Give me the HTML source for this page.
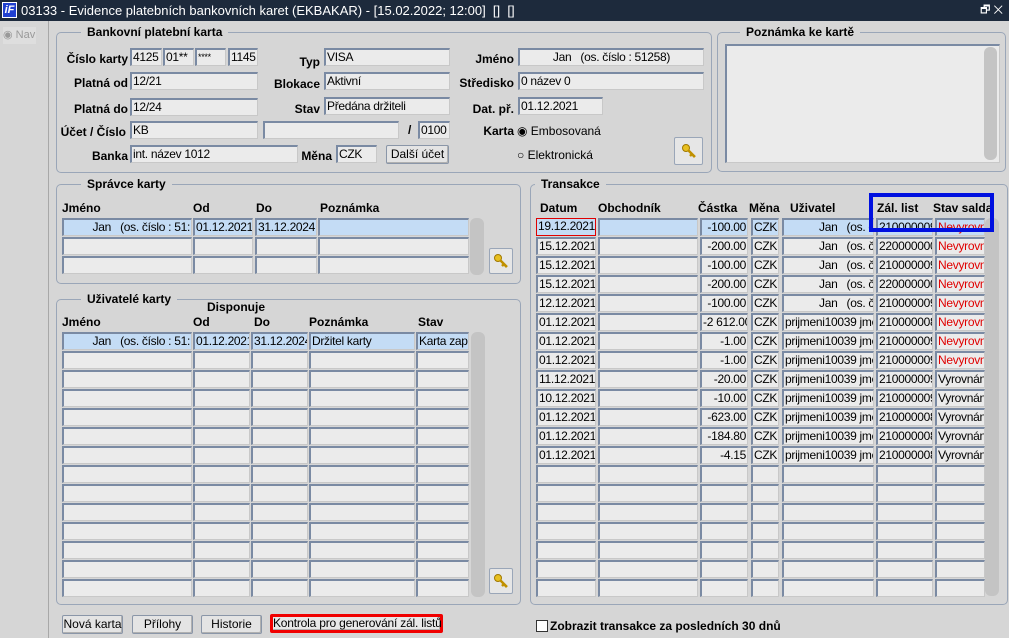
<!DOCTYPE html>
<html><head><meta charset="utf-8"><style>
*{box-sizing:border-box;margin:0;padding:0}
body{width:1009px;height:638px;overflow:hidden;background:#d6d6d6;font-family:"Liberation Sans",sans-serif;font-size:12px;color:#000;position:relative}
.a{position:absolute}
.f{position:absolute;height:18px;background:#ebebeb;border:1px solid #c8c8c8;border-top:2px solid #7a8aa3;border-left:2px solid #7a8aa3;padding:0 1px;line-height:14px;white-space:nowrap;overflow:hidden;font-size:12px;letter-spacing:-0.3px}
.s{background:#c4dcf5}
.r{text-align:right}
.l{position:absolute;font-weight:bold;white-space:nowrap;text-align:right}
.h{position:absolute;font-weight:bold;white-space:nowrap}
.g{position:absolute;border:1px solid #9aa6b8;border-radius:5px}
.gt{position:absolute;background:#d6d6d6;font-weight:bold;padding:0 6px;top:-8px;font-size:12px}
.btn{position:absolute;height:19px;border:1px solid #8a96a8;background:#e4e4e4;border-radius:2px;text-align:center;line-height:16px;font-size:12px;white-space:nowrap;box-shadow:inset -1px -1px 0 #b0b0b0}
.sb{position:absolute;background:#c4c4c4;border-radius:6px}
.key{position:absolute;width:24px;height:26px;border:1px solid #9aa6b8;background:#e6e6e6;border-radius:2px}
.key svg{position:absolute;left:50%;top:50%;margin:-8px 0 0 -8px}
.red{color:#e00000}
</style></head><body>
<div class="a" style="left:0;top:0;width:1009px;height:21px;background:#1d2a3c;color:#fff;font-size:13px;line-height:21px">
<div class="a" style="left:2px;top:2px;width:15px;height:16px;background:#2040d0;color:#fff;font-weight:bold;font-style:italic;font-size:11px;line-height:14px;text-align:center;border:1px solid #fff">iF</div>
<span style="position:absolute;left:21px">03133 - Evidence platebních bankovních karet (EKBAKAR) - [15.02.2022; 12:00]&nbsp; [] &nbsp;[]</span>
<span style="position:absolute;right:6px;font-size:11px">🗗 ✕</span></div>
<div class="a" style="left:0;top:21px;width:49px;height:617px;border-right:1px solid #a8a8a8"></div>
<div class="a" style="left:3px;top:27px;width:33px;height:17px;background:#dedede;color:#999;font-size:11px;line-height:17px">◉ Nav</div>

<div class="g" style="left:56px;top:32px;width:656px;height:141px"><div class="gt" style="left:24px">Bankovní platební karta</div></div>
<div class="l" style="left:60px;top:52px;width:68px">Číslo karty</div>
<div class="f" style="left:130px;top:48px;width:32px">4125</div>
<div class="f" style="left:163px;top:48px;width:31px">01**</div>
<div class="f" style="left:195px;top:48px;width:31px;font-size:9px">****</div>
<div class="f" style="left:228px;top:48px;width:30px">1145</div>
<div class="l" style="left:60px;top:76px;width:68px">Platná od</div>
<div class="f" style="left:130px;top:72px;width:128px">12/21</div>
<div class="l" style="left:60px;top:102px;width:68px">Platná do</div>
<div class="f" style="left:130px;top:98px;width:128px">12/24</div>
<div class="l" style="left:50px;top:125px;width:76px">Účet / Číslo</div>
<div class="f" style="left:130px;top:121px;width:128px">KB</div>
<div class="f" style="left:263px;top:121px;width:136px"></div>
<div class="h" style="left:408px;top:123px">/</div>
<div class="f" style="left:418px;top:121px;width:32px">0100</div>
<div class="l" style="left:60px;top:149px;width:68px">Banka</div>
<div class="f" style="left:130px;top:145px;width:168px">int. název 1012</div>
<div class="l" style="left:270px;top:55px;width:50px">Typ</div>
<div class="f" style="left:324px;top:48px;width:126px">VISA</div>
<div class="l" style="left:260px;top:77px;width:60px">Blokace</div>
<div class="f" style="left:324px;top:72px;width:126px">Aktivní</div>
<div class="l" style="left:270px;top:102px;width:50px">Stav</div>
<div class="f" style="left:324px;top:97px;width:126px">Předána držiteli</div>
<div class="l" style="left:290px;top:149px;width:42px">Měna</div>
<div class="f" style="left:336px;top:145px;width:41px">CZK</div>
<div class="btn" style="left:386px;top:145px;width:63px">Další účet</div>
<div class="l" style="left:460px;top:52px;width:54px">Jméno</div>
<div class="f" style="left:518px;top:48px;width:186px;text-align:center">Jan &nbsp; (os. číslo : 51258)</div>
<div class="l" style="left:450px;top:76px;width:64px">Středisko</div>
<div class="f" style="left:518px;top:72px;width:186px">0 název 0</div>
<div class="l" style="left:450px;top:102px;width:64px">Dat. př.</div>
<div class="f" style="left:518px;top:97px;width:85px">01.12.2021</div>
<div class="l" style="left:470px;top:124px;width:44px">Karta</div>
<div class="a" style="left:517px;top:124px">◉ Embosovaná</div>
<div class="a" style="left:517px;top:148px">○ Elektronická</div>
<div class="key" style="left:674px;top:137px;width:29px;height:28px"><svg width="16" height="16" viewBox="0 0 16 16"><circle cx="5" cy="5" r="3.5" fill="#e8c020" stroke="#a07800"/><path d="M7 7 L14 14 M11 11 L9 13 M13 13 L12 14" stroke="#c09000" stroke-width="2.5" fill="none"/></svg></div>

<div class="g" style="left:717px;top:32px;width:289px;height:140px"><div class="gt" style="left:22px">Poznámka ke kartě</div></div>
<div class="f" style="left:725px;top:44px;width:275px;height:119px"></div>
<div class="sb" style="left:984px;top:47px;width:13px;height:113px"></div>

<div class="g" style="left:56px;top:184px;width:465px;height:100px"><div class="gt" style="left:24px">Správce karty</div></div>
<div class="h" style="left:62px;top:201px">Jméno</div><div class="h" style="left:193px;top:201px">Od</div><div class="h" style="left:256px;top:201px">Do</div><div class="h" style="left:320px;top:201px">Poznámka</div>
<div class="sb" style="left:470px;top:218px;width:14px;height:57px"></div>
<div class="key" style="left:489px;top:248px"><svg width="16" height="16" viewBox="0 0 16 16"><circle cx="5" cy="5" r="3.5" fill="#e8c020" stroke="#a07800"/><path d="M7 7 L14 14 M11 11 L9 13 M13 13 L12 14" stroke="#c09000" stroke-width="2.5" fill="none"/></svg></div>

<div class="g" style="left:56px;top:299px;width:465px;height:306px"><div class="gt" style="left:24px">Uživatelé karty</div></div>
<div class="h" style="left:207px;top:300px">Disponuje</div>
<div class="h" style="left:62px;top:315px">Jméno</div><div class="h" style="left:193px;top:315px">Od</div><div class="h" style="left:254px;top:315px">Do</div><div class="h" style="left:309px;top:315px">Poznámka</div><div class="h" style="left:418px;top:315px">Stav</div>
<div class="sb" style="left:471px;top:332px;width:14px;height:265px"></div>
<div class="key" style="left:489px;top:568px"><svg width="16" height="16" viewBox="0 0 16 16"><circle cx="5" cy="5" r="3.5" fill="#e8c020" stroke="#a07800"/><path d="M7 7 L14 14 M11 11 L9 13 M13 13 L12 14" stroke="#c09000" stroke-width="2.5" fill="none"/></svg></div>

<div class="g" style="left:530px;top:184px;width:478px;height:421px"><div class="gt" style="left:4px">Transakce</div></div>
<div class="h" style="left:540px;top:201px">Datum</div><div class="h" style="left:598px;top:201px">Obchodník</div><div class="h" style="left:698px;top:201px">Částka</div><div class="h" style="left:749px;top:201px">Měna</div><div class="h" style="left:790px;top:201px">Uživatel</div><div class="h" style="left:877px;top:201px">Zál. list</div><div class="h" style="left:933px;top:201px">Stav salda</div>
<div class="sb" style="left:985px;top:218px;width:14px;height:378px"></div>

<div id="rows"></div>
<div class="a" style="left:869px;top:193px;width:125px;height:39px;border:4px solid #0010e0"></div>

<div class="btn" style="left:62px;top:615px;width:61px">Nová karta</div>
<div class="btn" style="left:132px;top:615px;width:61px">Přílohy</div>
<div class="btn" style="left:201px;top:615px;width:61px">Historie</div>
<div class="btn" style="left:270px;top:614px;width:173px;border:3px solid #f00000;line-height:13px;background:#e8e8e8;letter-spacing:-0.2px">Kontrola pro generování zál. listů</div>
<div class="a" style="left:536px;top:620px;width:12px;height:12px;border:1px solid #333;background:#fff"></div>
<div class="h" style="left:550px;top:619px">Zobrazit transakce za posledních 30 dnů</div>

<script>
var h='';
function F(x,y,w,t,c,st){h+='<div class="f '+(c||'')+'" style="left:'+x+'px;top:'+y+'px;width:'+w+'px;'+(st||'')+'">'+(t||'')+'</div>';}
for(var i=0;i<3;i++){var y=218+19*i;var s=i==0?'s':'';
F(62,y,130,i==0?'<div style="text-align:right">Jan &nbsp; (os. číslo : 51:</div>':'',s);F(193,y,60,i==0?'01.12.2021':'',s);F(255,y,62,i==0?'31.12.2024':'',s);F(318,y,151,'',s);}
for(var i=0;i<14;i++){var y=332+19*i;var s=i==0?'s':'';
F(62,y,130,i==0?'<div style="text-align:right">Jan &nbsp; (os. číslo : 51:</div>':'',s);F(193,y,57,i==0?'01.12.2021':'',s);F(251,y,57,i==0?'31.12.2024':'',s);F(309,y,106,i==0?'Držitel karty':'',s);F(416,y,53,i==0?'Karta zapi':'',s);}
var d=[['19.12.2021','-100.00','J','210000009','N'],['15.12.2021','-200.00','J','220000000','N'],['15.12.2021','-100.00','J','210000009','N'],['15.12.2021','-200.00','J','220000000','N'],['12.12.2021','-100.00','J','210000009','N'],['01.12.2021','-2 612.00','P','210000008','N'],['01.12.2021','-1.00','P','210000009','N'],['01.12.2021','-1.00','P','210000009','N'],['11.12.2021','-20.00','P','210000009','V'],['10.12.2021','-10.00','P','210000009','V'],['01.12.2021','-623.00','P','210000008','V'],['01.12.2021','-184.80','P','210000008','V'],['01.12.2021','-4.15','P','210000008','V']];
for(var i=0;i<20;i++){var y=218+19*i;var r=d[i];var s=i==0?'s':'';
F(536,y,60,r?r[0]:'',s,i==0?'border:1px solid #e00000;':'');
F(598,y,100,'',s);F(700,y,48,r?r[1]:'','r '+s);F(751,y,28,r?'CZK':'',s);
F(782,y,92,r?(r[2]=='J'?'<span style="padding-left:34px">Jan &nbsp; (os. či</span>':'prijmeni10039 jmer'):'',s);
F(876,y,57,r?r[3]:'',s);F(935,y,50,r?(r[4]=='N'?'<span class="red">Nevyrovn</span>':'Vyrovnán'):'',s);}
document.getElementById('rows').innerHTML=h;
</script>
</body></html>
